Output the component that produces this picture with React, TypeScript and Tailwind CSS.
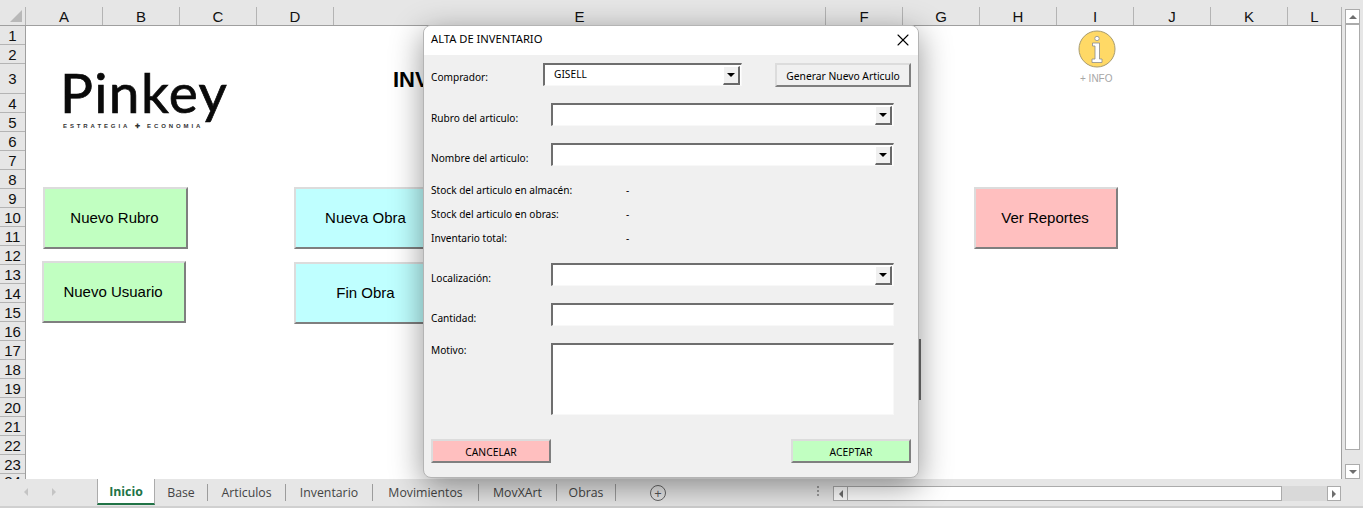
import React from "react";
import { X } from "lucide-react";

const columns = [
  { name: "A", width: 77 },
  { name: "B", width: 77 },
  { name: "C", width: 77 },
  { name: "D", width: 77 },
  { name: "E", width: 492 },
  { name: "F", width: 77 },
  { name: "G", width: 77 },
  { name: "H", width: 77 },
  { name: "I", width: 77 },
  { name: "J", width: 77 },
  { name: "K", width: 77 },
  { name: "L", width: 54 },
];

const rows = Array.from({ length: 24 }, (_, i) => ({
  name: i + 1,
  height: i === 2 ? 30 : i === 23 ? 6 : 19,
}));

const tabs = [
  { name: "Base", width: 53 },
  { name: "Articulos", width: 78 },
  { name: "Inventario", width: 87 },
  { name: "Movimientos", width: 106 },
  { name: "MovXArt", width: 78 },
  { name: "Obras", width: 59 },
];

const raised = "border-2 border-t-[#dcdcdc] border-l-[#dcdcdc] border-r-[#7f7f7f] border-b-[#7f7f7f]";
const sunken = "border-t-2 border-l-2 border-r border-b border-t-[#6e6e6e] border-l-[#6e6e6e] border-r-[#f8f8f8] border-b-[#f8f8f8] bg-white";

const SheetButton = ({ label, color, className }: { label: string; color: string; className: string }) => (
  <div className={`absolute flex items-center justify-center pr-[2px] text-[15px] text-black ${raised} ${color} ${className}`}>
    {label}
  </div>
);

const ComboBox = ({ value, className }: { value?: string; className: string }) => (
  <div className={`flex h-[23px] shrink-0 items-center justify-between ${sunken} ${className}`}>
    <span className="pb-[2px] pl-[9px] text-[10.2px] leading-[14px] text-black">{value}</span>
    <div className="mr-[1px] flex h-[19px] w-[17px] items-center justify-center border border-r-2 border-b-2 border-t-white border-l-white border-r-[#696969] border-b-[#696969] bg-[#f0f0f0]">
      <div className="h-0 w-0 border-x-[4px] border-t-[4px] border-x-transparent border-t-black" />
    </div>
  </div>
);

const Field = ({ label, children, className }: { label: string; children: React.ReactNode; className: string }) => (
  <div className={`flex items-center ${className}`}>
    <span className="w-[120px] shrink-0 pt-[6px] text-[10.1px] leading-[14px] text-black">{label}</span>
    {children}
  </div>
);

const StockLine = ({ label }: { label: string }) => (
  <div className="flex h-[24px] items-center text-[10.1px] leading-[14px] text-black">
    <span className="w-[195px]">{label}</span>
    <span>-</span>
  </div>
);

const InfoIcon = () => (
  <svg width="38" height="38" viewBox="0 0 38 38">
    <circle cx="19" cy="19" r="18" fill="#ffd966" stroke="#a89c70" strokeWidth="1" />
    <circle cx="19" cy="8.5" r="2.2" fill="#fff" stroke="#8c8c8c" strokeWidth="0.8" />
    <path d="M14.5 13h7v16h2.5v3.5h-10v-3.5h3v-13h-2.5z" fill="#fff" stroke="#8c8c8c" strokeWidth="0.8" />
  </svg>
);

export default function App() {
  return (
    <div className="relative flex h-[508px] w-[1363px] flex-col overflow-hidden bg-[#e6e6e6] font-['Liberation_Sans',sans-serif]">
      <div className="flex h-[479px]">
        <div className="flex w-[1342px] flex-col">
          {/* column headers */}
          <div className="flex h-[26px] shrink-0 items-end border-b border-[#9f9f9f]">
            <div className="flex h-[18px] w-[26px] shrink-0 items-end justify-end border-r border-[#b4b4b4] pr-[3px] pb-[3px]">
              <div className="h-0 w-0 border-b-[12px] border-l-[12px] border-b-[#b8b8b8] border-l-transparent" />
            </div>
            {columns.map((col) => (
              <div
                key={col.name}
                className="flex h-[18px] shrink-0 items-center justify-center border-r border-[#b4b4b4] text-[15px] leading-none text-[#111]"
                style={{ width: col.width }}
              >
                {col.name}
              </div>
            ))}
          </div>

          <div className="flex min-h-0 flex-1">
            {/* row headers */}
            <div className="w-[26px] shrink-0 overflow-hidden border-r border-[#9f9f9f]">
              {rows.map((row) => (
                <div
                  key={row.name}
                  className={`flex justify-center overflow-hidden border-b border-[#b4b4b4] text-[15px] leading-none text-[#111] ${row.name === 24 ? "items-start" : "items-center"}`}
                  style={{ height: row.height }}
                >
                  {row.name}
                </div>
              ))}
            </div>

            {/* worksheet: shapes float freely on it */}
            <div className="relative flex-1 border-r border-[#9f9f9f] bg-white">
              <div className="absolute top-[30px] left-[34px] font-['Lato',sans-serif] text-[55px] leading-[72px] tracking-[1.4px] text-[#0a0a0a] [-webkit-text-stroke:0.7px_#0a0a0a]">
                Pinkey
              </div>
              <div className="absolute top-[96px] left-[37px] text-[6px] leading-[8px] font-bold tracking-[2.9px] text-[#333]">
                ESTRATEGIA ✚ ECONOMIA
              </div>
              <div className="absolute top-[40px] left-[367px] text-[22px] leading-[28px] font-bold text-black">
                INVENTARIO
              </div>

              <SheetButton label="Nuevo Rubro" color="bg-[#c1ffc1]" className="top-[161px] left-[17px] h-[62px] w-[145px]" />
              <SheetButton label="Nuevo Usuario" color="bg-[#c1ffc1]" className="top-[235px] left-[16px] h-[62px] w-[144px]" />
              <SheetButton label="Nueva Obra" color="bg-[#bfffff]" className="top-[161px] left-[268px] h-[62px] w-[145px]" />
              <SheetButton label="Fin Obra" color="bg-[#bfffff]" className="top-[236px] left-[268px] h-[62px] w-[145px]" />
              <SheetButton label="Ver Reportes" color="bg-[#ffbfbf]" className="top-[161px] left-[948px] h-[62px] w-[144px]" />

              <div className="absolute top-[313px] left-[893px] h-[61px] w-[2px] bg-[#6e6e6e]" />

              <div className="absolute top-[4px] left-[1052px]">
                <InfoIcon />
              </div>
              <div className="absolute top-[46px] left-[1054px] text-[10px] leading-[14px] text-[#a6a6a6]">+ INFO</div>
            </div>
          </div>
        </div>

        {/* vertical scrollbar */}
        <div className="flex w-[21px] flex-col pt-[9px] pl-[3px] pr-[3px]">
          <div className="flex h-[15px] shrink-0 items-center justify-center border border-[#ababab] bg-white">
            <div className="h-0 w-0 border-x-[4px] border-b-[4px] border-x-transparent border-b-[#6e6e6e]" />
          </div>
          <div className="h-[426px] shrink-0 border border-[#ababab] bg-white" />
          <div className="flex-1" />
          <div className="flex h-[15px] shrink-0 items-center justify-center border border-[#ababab] bg-white">
            <div className="h-0 w-0 border-x-[4px] border-t-[4px] border-x-transparent border-t-[#6e6e6e]" />
          </div>
        </div>
      </div>

      {/* sheet tabs */}
      <div className="flex h-[29px] items-start border-b-2 border-[#d0d0d0] bg-[#e6e6e6] font-['Open_Sans',sans-serif] text-[12.3px] text-[#444]">
        <div className="flex h-[25px] w-[97px] shrink-0 items-center gap-[24px] pl-[24px]">
          <div className="h-0 w-0 border-y-[4px] border-r-[4px] border-y-transparent border-r-[#c4c4c4]" />
          <div className="h-0 w-0 border-y-[4px] border-l-[4px] border-y-transparent border-l-[#c4c4c4]" />
        </div>
        <div className="flex h-[26px] w-[58px] shrink-0 items-center justify-center border-x border-b-2 border-x-[#ababab] border-b-[#217346] bg-white pt-[3px] font-bold text-[#217346]">
          Inicio
        </div>
        {tabs.map((tab) => (
          <div key={tab.name} className="mt-[5px] flex h-[17px] shrink-0 items-center justify-center border-r border-[#9c9c9c] pt-[1px]" style={{ width: tab.width }}>
            {tab.name}
          </div>
        ))}
        <div className="mt-[6px] ml-[34px] flex h-[16px] w-[16px] items-center justify-center rounded-full border border-[#666] text-[13px] leading-none text-[#555]">
          +
        </div>
        <div className="mt-[7px] ml-[151px] flex w-[3px] flex-col gap-[2px]">
          <div className="h-[2px] w-[2px] bg-[#9c9c9c]" />
          <div className="h-[2px] w-[2px] bg-[#9c9c9c]" />
          <div className="h-[2px] w-[2px] bg-[#9c9c9c]" />
        </div>
        {/* horizontal scrollbar */}
        <div className="mt-[7px] ml-[13px] flex h-[15px] w-[508px] bg-[#d9d9d9]">
          <div className="flex w-[15px] shrink-0 items-center justify-center border border-[#ababab] bg-white">
            <div className="h-0 w-0 border-y-[4px] border-r-[4px] border-y-transparent border-r-[#6e6e6e]" />
          </div>
          <div className="w-[434px] shrink-0 border border-l-0 border-[#ababab] bg-white" />
          <div className="flex-1" />
          <div className="flex w-[14px] shrink-0 items-center justify-center border border-[#ababab] bg-white">
            <div className="h-0 w-0 border-y-[4px] border-l-[4px] border-y-transparent border-l-[#6e6e6e]" />
          </div>
        </div>
      </div>

      {/* modal dialog */}
      <div className="absolute top-[25px] left-[423px] flex h-[453px] w-[496px] flex-col overflow-hidden rounded-lg border border-[#b4b4b4] bg-[#f0f0f0] font-['Noto_Sans',sans-serif] shadow-[0_8px_32px_rgba(0,0,0,0.42)]">
        <div className="flex h-[29px] shrink-0 items-center justify-between bg-white pr-[5px] pb-[2px] pl-[7px]">
          <span className="text-[11.2px] text-black">ALTA DE INVENTARIO</span>
          <X size={20} strokeWidth={1.3} className="text-black" />
        </div>

        <div className="flex flex-1 flex-col px-[7px]">
          <div className="mt-[8px] flex items-start">
            <span className="w-[112px] shrink-0 pt-[7px] text-[10.1px] leading-[14px] text-black">Comprador:</span>
            <ComboBox value="GISELL" className="w-[199px]" />
            <div className={`ml-[33px] flex h-[24px] w-[136px] shrink-0 items-center justify-center bg-[#f0f0f0] pt-[1px] text-[10.3px] leading-[14px] text-black ${raised}`}>
              Generar Nuevo Articulo
            </div>
          </div>

          <Field label="Rubro del articulo:" className="mt-[16px]">
            <ComboBox className="w-[343px]" />
          </Field>
          <Field label="Nombre del articulo:" className="mt-[17px]">
            <ComboBox className="w-[343px]" />
          </Field>

          <div className="mt-[12px] flex flex-col">
            <StockLine label="Stock del articulo en almacén:" />
            <StockLine label="Stock del articulo en obras:" />
            <StockLine label="Inventario total:" />
          </div>

          <Field label="Localización:" className="mt-[13px]">
            <ComboBox className="w-[343px]" />
          </Field>
          <Field label="Cantidad:" className="mt-[17px]">
            <div className={`h-[23px] w-[343px] shrink-0 ${sunken}`} />
          </Field>
          <div className="mt-[17px] flex">
            <span className="w-[120px] shrink-0 text-[10.1px] leading-[14px] text-black">Motivo:</span>
            <div className={`h-[72px] w-[343px] shrink-0 ${sunken}`} />
          </div>

          <div className="mt-[24px] flex justify-between">
            <div className={`flex h-[24px] w-[120px] items-center justify-center bg-[#ffbfbf] pt-[1px] text-[10.3px] leading-[14px] text-black ${raised}`}>
              CANCELAR
            </div>
            <div className={`flex h-[24px] w-[120px] items-center justify-center bg-[#c1ffc1] pt-[1px] text-[10.3px] leading-[14px] text-black ${raised}`}>
              ACEPTAR
            </div>
          </div>
        </div>
      </div>
    </div>
  );
}
